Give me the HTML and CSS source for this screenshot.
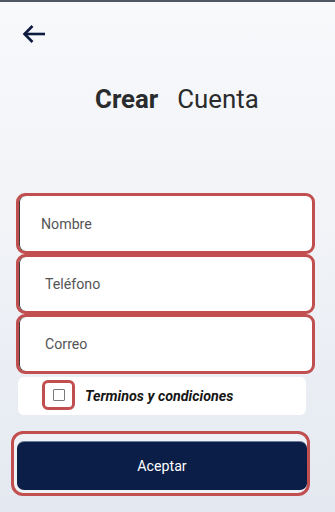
FILE: index.html
```html
<!DOCTYPE html>
<html lang="es">
<head>
<meta charset="utf-8">
<title>Crear Cuenta</title>
<link rel="stylesheet" href="styles.css">
</head>
<body>
<div class="screen">
  <div class="topbar"></div>
  <div class="back">
    <svg width="24" height="20" viewBox="0 0 24 20" aria-hidden="true">
      <path d="M2.5 10H23" stroke="#0d1b3e" stroke-width="2.6" fill="none"/>
      <path d="M10.5 2L2.5 10L10.5 18" stroke="#0d1b3e" stroke-width="2.6" fill="none" stroke-linejoin="miter"/>
    </svg>
  </div>
  <h1 class="title"><span class="title-bold">Crear</span><span class="title-reg">Cuenta</span></h1>
  <form class="form">
    <div class="field field-first"><span class="label">Nombre</span></div>
    <div class="field"><span class="label label-wide">Teléfono</span></div>
    <div class="field"><span class="label label-wide">Correo</span></div>
    <div class="terms">
      <div class="check-outline"><span class="check-box"></span></div>
      <span class="terms-text">Terminos y condiciones</span>
    </div>
    <div class="btn-outline">
      <div class="btn">Aceptar</div>
    </div>
  </form>
</div>
</body>
</html>
```
FILE: styles.css
```css
html, body {
  margin: 0;
  padding: 0;
}
body {
  width: 335px;
  height: 512px;
  overflow: hidden;
  font-family: Roboto, "Noto Sans", sans-serif;
  background: linear-gradient(180deg, #f8f9fb 0%, #f1f3f7 45%, #e4e9f1 100%);
}
.screen {
  width: 335px;
  height: 512px;
}
.topbar {
  height: 2px;
  background: #525862;
}
.back {
  margin: 22px 0 0 22px;
  height: 20px;
  display: flex;
}
.title {
  margin: 40px 0 0 0;
  padding-left: 95px;
  display: flex;
  gap: 19px;
  font-size: 25.8px;
  line-height: 30px;
  color: #2a2b2d;
  font-weight: 400;
}
.title-bold {
  font-weight: 700;
}
.form {
  margin: 79px 0 0 0;
  display: flex;
  flex-direction: column;
}
.field {
  margin-left: 16px;
  width: 299px;
  height: 60px;
  box-sizing: border-box;
  border: 3px solid #c24f50;
  border-radius: 9px;
  background: #fff;
  box-shadow: inset 1px 0 0 #3a3a3a;
  display: flex;
  align-items: center;
}
.field-first {
  height: 61px;
}
.label {
  padding-left: 22px;
  font-size: 14.2px;
  color: #555;
}
.label-wide {
  padding-left: 26px;
}
.terms {
  margin: 3px 0 0 18px;
  width: 288px;
  height: 38px;
  background: #fff;
  border-radius: 6px;
  display: flex;
  align-items: center;
  padding-left: 24px;
  box-sizing: border-box;
  gap: 10px;
}
.check-outline {
  width: 33px;
  height: 30px;
  box-sizing: border-box;
  border: 3px solid #c24f50;
  border-radius: 6px;
  display: flex;
  align-items: center;
  justify-content: center;
  margin-top: -2px;
}
.check-box {
  width: 12px;
  height: 12px;
  box-sizing: border-box;
  border: 1.5px solid #7b7b7b;
  border-radius: 1px;
}
.terms-text {
  font-size: 14.3px;
  font-weight: 700;
  font-style: italic;
  color: #161616;
  margin-top: -1px;
}
.btn-outline {
  margin: 16px 0 0 11px;
  width: 299px;
  height: 65px;
  box-sizing: border-box;
  border: 3px solid #c24f50;
  border-radius: 12px;
  background: #eef1f6;
  padding: 8px 0 3px 3px;
}
.btn {
  height: 48px;
  border-radius: 7px;
  background: #0a1e48;
  color: #fff;
  font-size: 14.2px;
  display: flex;
  align-items: center;
  justify-content: center;
  box-shadow: 0 -1px 0 #6d7c9a;
}
```
